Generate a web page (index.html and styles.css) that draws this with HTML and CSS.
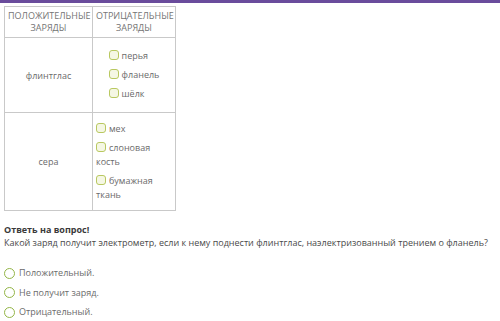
FILE: index.html
```html
<!DOCTYPE html>
<html>
<head>
    <meta charset="utf-8">
    <title>Заряды</title>
    <link rel="stylesheet" href="styles.css">
</head>
<body>
    <div class="topbar"></div>

    <div class="content">
        <table class="charges">
            <tr>
                <th class="col-pos">Положительные заряды</th>
                <th>Отрицательные заряды</th>
            </tr>
            <tr class="row-first">
                <td>флинтглас</td>
                <td>
                    <ul class="picks">
                        <li><span class="box"></span>перья</li>
                        <li><span class="box"></span>фланель</li>
                        <li><span class="box"></span>шёлк</li>
                    </ul>
                </td>
            </tr>
            <tr class="row-second">
                <td>сера</td>
                <td>
                    <ul class="picks">
                        <li><span class="box"></span>мех</li>
                        <li><span class="box"></span>слоновая кость</li>
                        <li><span class="box"></span>бумажная ткань</li>
                    </ul>
                </td>
            </tr>
        </table>

        <div class="question">
            <p class="q-title">Ответь на вопрос!</p>
            <p class="q-text">Какой заряд получит электрометр, если к нему поднести флинтглас, наэлектризованный трением о фланель?</p>
        </div>

        <ul class="answers">
            <li><span class="radio"></span>Положительный.</li>
            <li><span class="radio"></span>Не получит заряд.</li>
            <li><span class="radio"></span>Отрицательный.</li>
        </ul>
    </div>
</body>
</html>
```

FILE: styles.css
```css
:root {
    --accent: #6a4c9c;
    --line: #c9c9c9;
    --text: #6b6b6b;
    --text-dark: #4a4a4a;
    --box-border: #b9c860;
    --box-fill: #f5f7e4;
    --radio-border: #93b546;
}

* {
    margin: 0;
    padding: 0;
    box-sizing: border-box;
}

body {
    font-family: 'Open Sans', 'Liberation Sans', sans-serif;
    font-size: 9px;
    color: var(--text);
    background: #fff;
}

.topbar {
    height: 3px;
    background: var(--accent);
}

.content {
    padding: 3px 4px 0;
}

/* таблица зарядов */
.charges {
    width: 172px;
    border-collapse: collapse;
    table-layout: fixed;
}

.charges th,
.charges td {
    border: 1px solid var(--line);
    text-align: center;
    vertical-align: middle;
    padding: 0 3px;
}

.charges th {
    font-weight: normal;
    text-transform: uppercase;
    line-height: 12.5px;
    height: 31px;
    color: #757575;
}

.col-pos {
    width: 88px;
}

.row-first td {
    height: 75px;
}

.row-second td {
    height: 98px;
}

.picks {
    list-style: none;
    display: inline-block;
    text-align: left;
    line-height: 14px;
}

.picks li + li {
    margin-top: 5px;
}

.box {
    display: inline-block;
    width: 10px;
    height: 10px;
    border: 1.5px solid var(--box-border);
    background: var(--box-fill);
    border-radius: 3px;
    vertical-align: -1px;
    margin-right: 3px;
}

/* вопрос */
.question {
    margin-top: 12px;
    line-height: 13px;
    color: var(--text-dark);
}

.q-title {
    font-weight: bold;
    color: #3a3a3a;
}

.answers {
    list-style: none;
    margin-top: 17px;
    line-height: 14px;
}

.answers li {
    display: flex;
    align-items: center;
    gap: 4px;
}

.answers li + li {
    margin-top: 5.5px;
}

.radio {
    width: 11px;
    height: 11px;
    border: 1.5px solid var(--radio-border);
    border-radius: 50%;
    background: #fff;
    flex-shrink: 0;
}
```
